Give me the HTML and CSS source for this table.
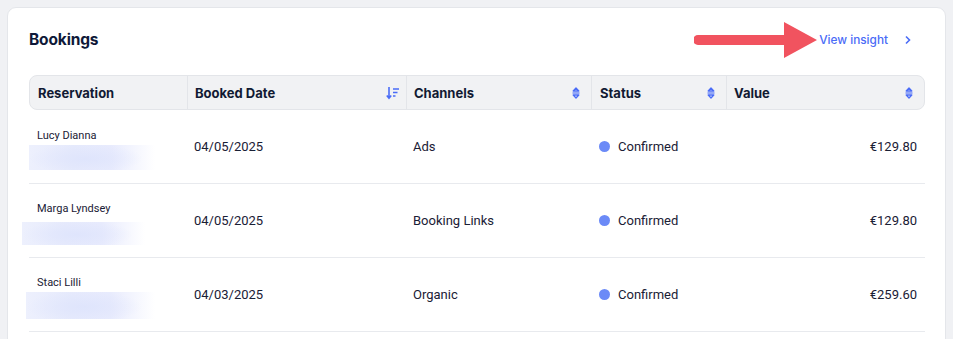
FILE: index.html
```html
<!DOCTYPE html>
<html lang="en">
<head>
<meta charset="utf-8">
<title>Bookings</title>
<link rel="stylesheet" href="styles.css">
</head>
<body>
<div class="card">
  <div class="card-head">
    <h2 class="title">Bookings</h2>
    <div class="insight">
      <svg class="arrow" width="124" height="36" viewBox="0 0 124 36"><path d="M4 13 H90 V0 L123 18 L90 36 V23 H4 A5 5 0 0 1 4 13 Z" fill="#f1535f"/></svg>
      <a class="insight-link" href="#">View insight</a>
      <svg class="chev" width="8" height="10" viewBox="0 0 8 10"><path d="M2 1.5 L5.5 5 L2 8.5" fill="none" stroke="#4a6cf7" stroke-width="1.6"/></svg>
    </div>
  </div>
  <div class="table">
    <div class="thead">
      <div class="th c1">Reservation</div>
      <div class="th c2">Booked Date
        <svg class="sort" width="14" height="14" viewBox="0 0 14 14"><path d="M3 1 V12 M0.8 9.5 L3 12.2 L5.2 9.5" fill="none" stroke="#4a6cf7" stroke-width="1.6"/><path d="M7 3 H13 M7 6.5 H11.5 M7 10 H9.5" stroke="#4a6cf7" stroke-width="1.4"/></svg>
      </div>
      <div class="th c3">Channels
        <svg class="sort" width="10" height="14" viewBox="0 0 10 14"><path d="M2.2 5 L5 2 L7.8 5 Z M2.2 9 L5 12 L7.8 9 Z" fill="none" stroke="#4a6cf7" stroke-width="1.3" stroke-linejoin="round"/><path d="M1.5 7 H8.5" stroke="#4a6cf7" stroke-width="1.1"/></svg>
      </div>
      <div class="th c4">Status
        <svg class="sort" width="10" height="14" viewBox="0 0 10 14"><path d="M2.2 5 L5 2 L7.8 5 Z M2.2 9 L5 12 L7.8 9 Z" fill="none" stroke="#4a6cf7" stroke-width="1.3" stroke-linejoin="round"/><path d="M1.5 7 H8.5" stroke="#4a6cf7" stroke-width="1.1"/></svg>
      </div>
      <div class="th c5">Value
        <svg class="sort" width="10" height="14" viewBox="0 0 10 14"><path d="M2.2 5 L5 2 L7.8 5 Z M2.2 9 L5 12 L7.8 9 Z" fill="none" stroke="#4a6cf7" stroke-width="1.3" stroke-linejoin="round"/><path d="M1.5 7 H8.5" stroke="#4a6cf7" stroke-width="1.1"/></svg>
      </div>
    </div>

    <div class="row">
      <div class="td c1">
        <div class="guest">
          <span class="name">Lucy Dianna</span>
          <span class="blur blur-a"></span>
        </div>
      </div>
      <div class="td c2">04/05/2025</div>
      <div class="td c3">Ads</div>
      <div class="td c4"><span class="dot"></span>Confirmed</div>
      <div class="td c5">€129.80</div>
    </div>

    <div class="row">
      <div class="td c1">
        <div class="guest">
          <span class="name">Marga Lyndsey</span>
          <span class="blur blur-b"></span>
        </div>
      </div>
      <div class="td c2">04/05/2025</div>
      <div class="td c3">Booking Links</div>
      <div class="td c4"><span class="dot"></span>Confirmed</div>
      <div class="td c5">€129.80</div>
    </div>

    <div class="row">
      <div class="td c1">
        <div class="guest">
          <span class="name">Staci Lilli</span>
          <span class="blur blur-c"></span>
        </div>
      </div>
      <div class="td c2">04/03/2025</div>
      <div class="td c3">Organic</div>
      <div class="td c4"><span class="dot"></span>Confirmed</div>
      <div class="td c5">€259.60</div>
    </div>
  </div>
</div>
</body>
</html>
```

FILE: styles.css
```css
* { box-sizing: border-box; }
html, body { height: 100%; }
body {
  margin: 0;
  padding: 7px 7px 0 7px;
  background: #f0f1f4;
  font-family: Roboto, "Liberation Sans", sans-serif;
  color: #16203a;
  overflow: hidden;
}
.card {
  background: #fff;
  border: 1px solid #e4e6ea;
  border-radius: 9px;
  padding: 18px 20px 40px 21px;
  height: 400px;
}
.card-head {
  display: flex;
  align-items: center;
  justify-content: space-between;
  height: 27px;
  margin-bottom: 22px;
}
.title {
  margin: 0;
  font-family: Inter, Roboto, sans-serif;
  font-size: 15.5px;
  font-weight: 700;
  color: #0e1838;
  letter-spacing: -0.15px;
}
.insight {
  display: flex;
  align-items: center;
  margin-right: 13px;
}
.arrow { margin-right: 1px; }
.insight-link {
  font-family: Inter, Roboto, sans-serif;
  font-size: 11.8px;
  font-weight: 500;
  color: #4a6cf7;
  text-decoration: none;
  margin-right: 16px;
}
.chev { display: block; }

.table { width: 896px; }
.thead {
  display: flex;
  height: 35px;
  background: #f1f2f4;
  border: 1px solid #e3e5e9;
  border-radius: 8px;
}
.th {
  display: flex;
  align-items: center;
  justify-content: space-between;
  padding: 0 8px;
  font-family: Inter, Roboto, sans-serif;
  font-size: 13px;
  font-weight: 700;
  color: #111a33;
  border-left: 1px solid #e3e5e9;
}
.th:first-child { border-left: 0; }
.c1 { width: 157px; }
.c2 { width: 219px; }
.c3 { width: 185px; }
.c4 { width: 135px; }
.c5 { flex: 1; }
.th.c2 { padding-left: 7px; padding-right: 6px; }
.th.c3 { padding-left: 7px; padding-right: 10px; }
.th.c4 { padding-right: 10px; }
.th.c5 { padding-left: 7px; padding-right: 10px; }
.sort { display: block; }

.row {
  display: flex;
  height: 74px;
  border-bottom: 1px solid #e8eaee;
}
.td {
  display: flex;
  align-items: center;
  font-size: 13px;
  color: #1a2035;
  padding-left: 8px;
}
.td.c1 { padding-left: 0; }
.td.c3 { padding-left: 8px; }
.td.c4 { padding-left: 9px; }
.td.c5 { justify-content: flex-end; padding-right: 8px; }
.guest {
  display: flex;
  flex-direction: column;
  margin-top: 6px;
}
.name {
  font-size: 11px;
  color: #1a2035;
  padding-left: 8px;
  line-height: 14px;
  margin-bottom: 2px;
}
.blur {
  display: block;
  height: 25px;
  background:
    radial-gradient(ellipse 45% 60% at 45% 55%, rgba(222,228,252,0.9) 0%, rgba(222,228,252,0) 100%),
    linear-gradient(90deg, #edf0fd 0%, #e6eafc 35%, #e8ebfd 65%, #ffffff 100%);
}
.blur-a { width: 126px; }
.blur-b { width: 123px; margin-left: -7px; height: 23px; margin-top: 4px; }
.blur-c { width: 129px; margin-left: -3px; height: 27px; margin-top: 0; }
.dot {
  width: 11px;
  height: 11px;
  border-radius: 50%;
  background: #6b8af7;
  margin-right: 8px;
}
```
